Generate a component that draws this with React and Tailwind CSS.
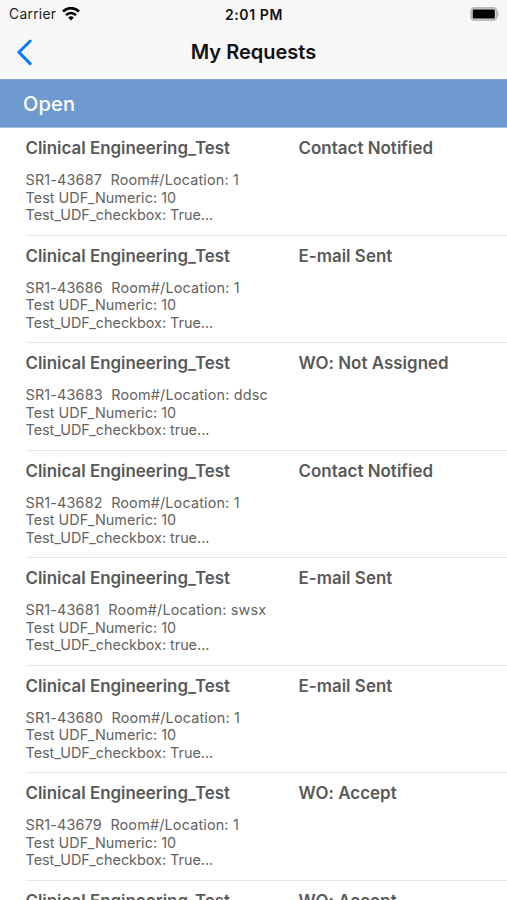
const requests = [
  { id: "SR1-43687", location: "1", checkbox: "True", status: "Contact Notified" },
  { id: "SR1-43686", location: "1", checkbox: "True", status: "E-mail Sent" },
  { id: "SR1-43683", location: "ddsc", checkbox: "true", status: "WO: Not Assigned" },
  { id: "SR1-43682", location: "1", checkbox: "true", status: "Contact Notified" },
  { id: "SR1-43681", location: "swsx", checkbox: "true", status: "E-mail Sent" },
  { id: "SR1-43680", location: "1", checkbox: "True", status: "E-mail Sent" },
  { id: "SR1-43679", location: "1", checkbox: "True", status: "WO: Accept" },
  { id: "SR1-43678", location: "1", checkbox: "True", status: "WO: Accept" },
];

const title = "text-[16.9px] leading-5 font-semibold";

function StatusBar() {
  return (
    <div className="grid grid-cols-3 items-center h-7 pl-[9px] pr-2 text-[13px]">
      <div className="flex items-center gap-1.5">
        <span className="text-[13.8px] tracking-[0.3px] text-[#222]">Carrier</span>
        <svg width="18" height="14" viewBox="0 0 18 14" fill="none" stroke="black" strokeWidth="2.7">
          <path d="M1 4.5a11.3 11.3 0 0 1 16 0" />
          <path d="M4 8.1a7 7 0 0 1 10 0" />
          <path d="M9 13.5L6.2 10.6a4 4 0 0 1 5.6 0z" fill="black" stroke="none" />
        </svg>
      </div>
      <span className="text-center text-[14px] font-semibold tracking-[0.6px] text-[#111]">2:01 PM</span>
      <svg className="justify-self-end" width="29" height="14" viewBox="0 0 29 14">
        <rect x="1" y="0.8" width="25.8" height="12.4" rx="3.5" fill="#d0d0d0" stroke="#b8b8b8" strokeWidth="1.5" />
        <rect x="2.8" y="2.6" width="22" height="8.8" rx="1" fill="black" />
        <path d="M27.2 4.5c2 .8 2 4.2 0 5z" fill="#b5b5b5" />
      </svg>
    </div>
  );
}

function RequestRow({ request }) {
  return (
    <li className="ml-[25.5px] h-[107.5px] shrink-0 border-b border-[#e6e6e6] pt-2.5">
      <div className="flex">
        <span className={`${title} w-[273px]`}>Clinical Engineering_Test</span>
        <span className={`${title} tracking-[0.04px]`}>{request.status}</span>
      </div>
      <div className="mt-[13.4px] text-[14.4px] leading-[17.4px] whitespace-pre text-[#636363]">
        <p className="tracking-[0.16px]">{request.id}{"  "}Room#/Location: {request.location}</p>
        <p className="tracking-[0.04px]">Test UDF_Numeric: 10</p>
        <p className="tracking-[-0.02px]">Test_UDF_checkbox: {request.checkbox}...</p>
      </div>
    </li>
  );
}

export default function App() {
  return (
    <div className="flex flex-col h-screen overflow-hidden bg-white font-['Inter',sans-serif]">
      <header className="h-[79px] shrink-0 bg-[#f7f7f7] text-[#111]">
        <StatusBar />
        <div className="grid grid-cols-3 items-center h-12 px-4">
          <svg
            width="18"
            height="28"
            viewBox="0 0 18 28"
            fill="none"
            stroke="#087bff"
            strokeWidth="3"
            strokeLinecap="round"
          >
            <path d="M14.2 3L2.9 14.3l11.3 11.3" />
          </svg>
          <h1 className="text-center text-[20px] font-semibold whitespace-nowrap">My Requests</h1>
        </div>
      </header>
      <h2 className="flex items-center h-[49px] shrink-0 border-t border-t-[#86a3c9] border-b border-b-[#a9c3e3] bg-[#6f9ad0] pl-[23px] text-[20px] tracking-[0.2px] font-medium text-white">
        Open
      </h2>
      <ul className="flex flex-col text-[#595959]">
        {requests.map((request) => (
          <RequestRow key={request.id} request={request} />
        ))}
      </ul>
    </div>
  );
}
